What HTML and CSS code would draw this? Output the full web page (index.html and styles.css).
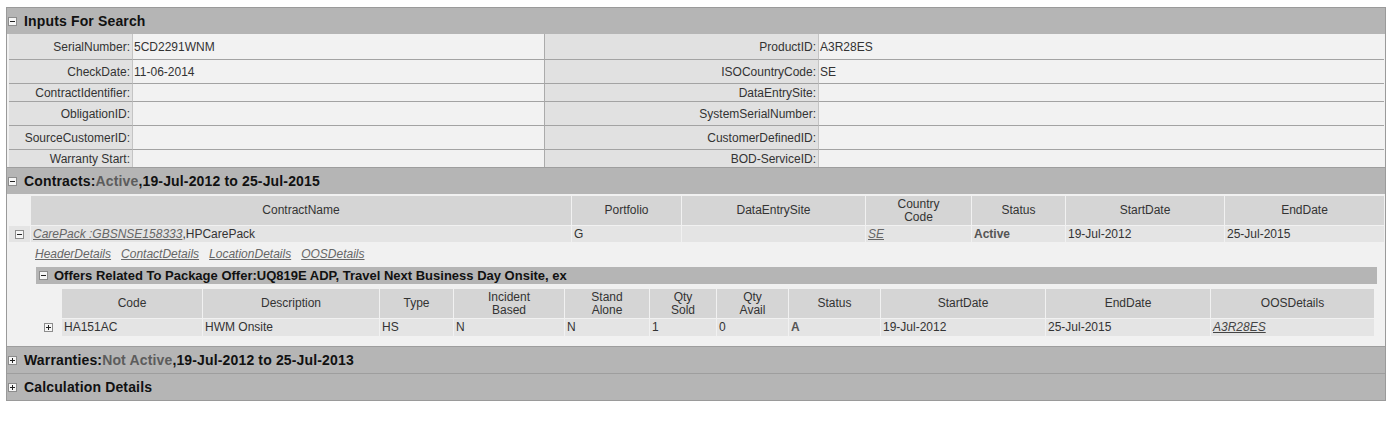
FILE: index.html
```html
<!DOCTYPE html>
<html>
<head>
<meta charset="utf-8">
<title>Warranty Check</title>
<link rel="stylesheet" href="styles.css">
</head>
<body>
<div class="panel">
  <div class="sec-head">
    <svg class="tog" viewBox="0 0 9 9"><rect x="0.5" y="0.5" width="8" height="8" fill="#f6f6f6" stroke="#8c8c8c"/><path d="M2 4.5h5" stroke="#222"/></svg>
    <span>Inputs For Search</span>
  </div>
  <div class="inputs">
    <div class="lbl">SerialNumber:</div><div class="val">5CD2291WNM</div><div class="lbl">ProductID:</div><div class="val last">A3R28ES</div>
    <div class="lbl">CheckDate:</div><div class="val">11-06-2014</div><div class="lbl">ISOCountryCode:</div><div class="val last">SE</div>
    <div class="lbl">ContractIdentifier:</div><div class="val"></div><div class="lbl">DataEntrySite:</div><div class="val last"></div>
    <div class="lbl">ObligationID:</div><div class="val"></div><div class="lbl">SystemSerialNumber:</div><div class="val last"></div>
    <div class="lbl">SourceCustomerID:</div><div class="val"></div><div class="lbl">CustomerDefinedID:</div><div class="val last"></div>
    <div class="lbl">Warranty Start:</div><div class="val"></div><div class="lbl">BOD-ServiceID:</div><div class="val last"></div>
  </div>

  <div class="sec-head">
    <svg class="tog" viewBox="0 0 9 9"><rect x="0.5" y="0.5" width="8" height="8" fill="#f6f6f6" stroke="#8c8c8c"/><path d="M2 4.5h5" stroke="#222"/></svg>
    <span>Contracts:<span class="state">Active</span>,19-Jul-2012 to 25-Jul-2015</span>
  </div>
  <div class="sec-body">
    <div class="grid contracts">
      <div class="th blank"></div>
      <div class="th">ContractName</div>
      <div class="th">Portfolio</div>
      <div class="th">DataEntrySite</div>
      <div class="th">Country<br>Code</div>
      <div class="th">Status</div>
      <div class="th">StartDate</div>
      <div class="th">EndDate</div>

      <div class="td icon-cell"><svg class="tog" viewBox="0 0 9 9"><rect x="0.5" y="0.5" width="8" height="8" fill="#f6f6f6" stroke="#8c8c8c"/><path d="M2 4.5h5" stroke="#222"/></svg></div>
      <div class="td"><a class="lnk" href="#">CarePack :GBSNSE158333</a>,HPCarePack</div>
      <div class="td">G</div>
      <div class="td"></div>
      <div class="td"><a class="lnk" href="#">SE</a></div>
      <div class="td strong">Active</div>
      <div class="td">19-Jul-2012</div>
      <div class="td">25-Jul-2015</div>
    </div>

    <div class="links">
      <a class="lnk" href="#">HeaderDetails</a>
      <a class="lnk" href="#">ContactDetails</a>
      <a class="lnk" href="#">LocationDetails</a>
      <a class="lnk" href="#">OOSDetails</a>
    </div>

    <div class="offers">
      <div class="sub-head">
        <svg class="tog" viewBox="0 0 9 9"><rect x="0.5" y="0.5" width="8" height="8" fill="#f6f6f6" stroke="#8c8c8c"/><path d="M2 4.5h5" stroke="#222"/></svg>
        <span>Offers Related To Package Offer:UQ819E ADP, Travel Next Business Day Onsite, ex</span>
      </div>
      <div class="grid offer-grid">
        <div class="th blank"></div>
        <div class="th">Code</div>
        <div class="th">Description</div>
        <div class="th">Type</div>
        <div class="th">Incident<br>Based</div>
        <div class="th">Stand<br>Alone</div>
        <div class="th">Qty<br>Sold</div>
        <div class="th">Qty<br>Avail</div>
        <div class="th">Status</div>
        <div class="th">StartDate</div>
        <div class="th">EndDate</div>
        <div class="th">OOSDetails</div>

        <div class="td icon-cell blank"><svg class="tog" viewBox="0 0 9 9"><rect x="0.5" y="0.5" width="8" height="8" fill="#f6f6f6" stroke="#8c8c8c"/><path d="M2 4.5h5M4.5 2v5" stroke="#222"/></svg></div>
        <div class="td">HA151AC</div>
        <div class="td">HWM Onsite</div>
        <div class="td">HS</div>
        <div class="td">N</div>
        <div class="td">N</div>
        <div class="td">1</div>
        <div class="td">0</div>
        <div class="td strong">A</div>
        <div class="td">19-Jul-2012</div>
        <div class="td">25-Jul-2015</div>
        <div class="td"><a class="lnk dark" href="#">A3R28ES</a></div>
      </div>
    </div>
  </div>

  <div class="sec-head">
    <svg class="tog" viewBox="0 0 9 9"><rect x="0.5" y="0.5" width="8" height="8" fill="#f6f6f6" stroke="#8c8c8c"/><path d="M2 4.5h5M4.5 2v5" stroke="#222"/></svg>
    <span>Warranties:<span class="state">Not Active</span>,19-Jul-2012 to 25-Jul-2013</span>
  </div>
  <div class="sec-head">
    <svg class="tog" viewBox="0 0 9 9"><rect x="0.5" y="0.5" width="8" height="8" fill="#f6f6f6" stroke="#8c8c8c"/><path d="M2 4.5h5M4.5 2v5" stroke="#222"/></svg>
    <span>Calculation Details</span>
  </div>
</div>
</body>
</html>
```

FILE: styles.css
```css
* { box-sizing: border-box; }

body {
  margin: 0;
  background: #ffffff;
  font-family: "Liberation Sans", Arial, sans-serif;
  font-size: 12px;
  color: #333333;
}

.panel {
  margin: 7px 0 0 6px;
  width: 1380px;
  border: 1px solid #9a9a9a;
  background: #f1f1f1;
}

.tog {
  width: 9px;
  height: 9px;
  display: block;
  flex: none;
}

.sec-head {
  height: 27px;
  border-top: 1px solid #9e9e9e;
  background: #b5b5b5;
  display: flex;
  align-items: center;
  gap: 7px;
  padding-left: 1px;
  font-weight: bold;
  font-size: 14px;
  letter-spacing: 0.15px;
  color: #111111;
}

.sec-head:first-child {
  border-top: 0;
  height: 26px;
}

.state {
  color: #5c5c5c;
}

/* Inputs for search */
.inputs {
  margin-left: 2px;
  width: 1375px;
  display: grid;
  grid-template-columns: 124px 412px 274px 565px;
  grid-template-rows: 25px 24px 18px 24px 24px 18px;
}

.inputs > div {
  display: flex;
  align-items: center;
  border-top: 1px solid #a3a3a3;
  white-space: nowrap;
}

.inputs > div:nth-child(-n+4) {
  border-top: 0;
}

.lbl {
  justify-content: flex-end;
  padding-right: 2px;
  background: #e1e1e1;
  border-right: 1px solid #c4c4c4;
}

.val {
  padding-left: 1px;
  background: #f2f2f2;
  border-right: 1px solid #ababab;
}

.val.last {
  border-right: 0;
}

/* Contracts */
.sec-body {
  padding: 2px 0 10px 2px;
}

.grid {
  display: grid;
  column-gap: 1px;
  row-gap: 1px;
}

.contracts {
  grid-template-columns: 21px 540px 109px 183px 105px 93px 158px 159px;
}

.th {
  height: 29px;
  background: #d5d5d5;
  display: flex;
  align-items: center;
  justify-content: center;
  text-align: center;
  line-height: 13px;
  color: #333333;
}

.th.blank,
.td.blank {
  background: transparent;
}

.td {
  height: 16px;
  line-height: 16px;
  background: #e4e4e4;
  padding-left: 2px;
  white-space: nowrap;
  color: #333333;
}

.icon-cell {
  display: flex;
  align-items: center;
  justify-content: center;
  padding-left: 0;
}

.strong {
  font-weight: bold;
  color: #555555;
}

.lnk {
  color: #666666;
  font-style: italic;
  text-decoration: underline;
}

.lnk.dark {
  color: #444444;
}

.links {
  margin: 4px 0 0 26px;
  height: 16px;
  line-height: 16px;
  display: flex;
  gap: 10px;
}

.offers {
  margin: 5px 0 0 27px;
  width: 1341px;
}

.sub-head {
  height: 17px;
  background: #b5b5b5;
  display: flex;
  align-items: center;
  gap: 6px;
  padding-left: 3px;
  font-weight: bold;
  font-size: 13px;
  color: #111111;
}

.offer-grid {
  margin-top: 5px;
  grid-template-columns: 25px 140px 176px 73px 110px 84px 66px 71px 91px 164px 164px 163px;
}

.offer-grid .td {
  height: 17px;
  line-height: 17px;
}
```
